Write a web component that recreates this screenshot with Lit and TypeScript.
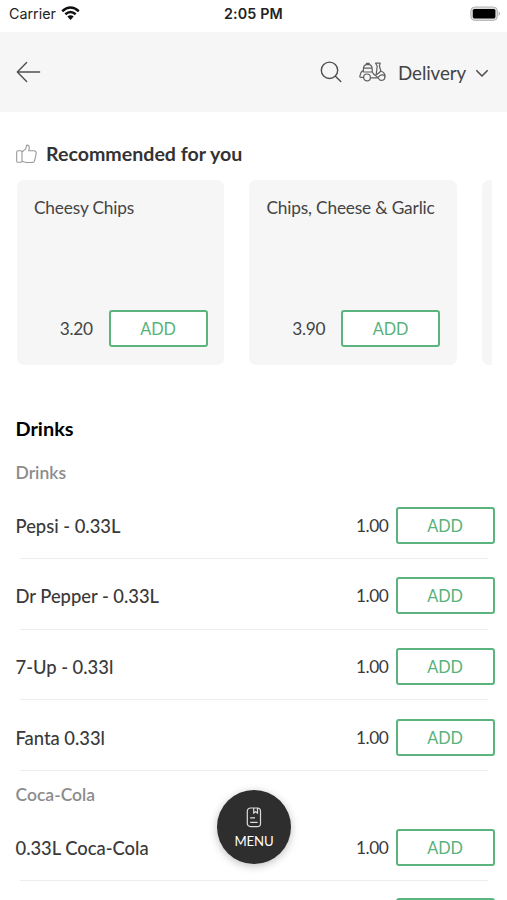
import { LitElement, html, css } from "lit";
import { customElement, property } from "lit/decorators.js";

interface Item {
  name: string;
  price: string;
}

const recommended: Item[] = [
  { name: "Cheesy Chips", price: "3.20" },
  { name: "Chips, Cheese & Garlic", price: "3.90" },
];

const sections: { title: string; items: Item[] }[] = [
  {
    title: "Drinks",
    items: [
      { name: "Pepsi - 0.33L", price: "1.00" },
      { name: "Dr Pepper - 0.33L", price: "1.00" },
      { name: "7-Up - 0.33l", price: "1.00" },
      { name: "Fanta 0.33l", price: "1.00" },
    ],
  },
  {
    title: "Coca-Cola",
    items: [{ name: "0.33L Coca-Cola", price: "1.00" }],
  },
];

@customElement("add-button")
export class AddButton extends LitElement {
  @property() label = "ADD";
  static styles = css`
    :host {
      display: block;
      flex: none;
    }
    .button {
      display: flex;
      align-items: center;
      justify-content: center;
      box-sizing: border-box;
      width: 99px;
      height: 37px;
      padding: 1px 0 0;
      border: 2px solid #5bb37d;
      border-radius: 3px;
      background: #fff;
      color: #58b27b;
      font: 400 16.3px/20px Lato, sans-serif;
      letter-spacing: -0.1px;
    }
  `;
  render() {
    return html`<button class="button">${this.label}</button>`;
  }
}

@customElement("status-bar")
export class StatusBar extends LitElement {
  static styles = css`
    :host {
      display: grid;
      grid-template-columns: 1fr auto 1fr;
      align-items: center;
      height: 32px;
      padding: 0 6px 4px 9px;
      box-sizing: border-box;
      background: #fff;
      color: #222;
      font: 400 14.3px/18px Inter, sans-serif;
    }
    .carrier {
      display: flex;
      align-items: center;
      gap: 5px;
    }
    .time {
      margin-right: 3px;
      font-weight: 600;
      font-size: 14.3px;
      letter-spacing: 0.14px;
    }
    .battery {
      justify-self: end;
      display: block;
      margin-top: -1px;
    }
    .wifi {
      display: block;
      margin-top: -2px;
    }
  `;
  render() {
    return html`
      <div class="carrier">
        <span>Carrier</span>
        <svg class="wifi" width="19" height="14" viewBox="0 0 19 14">
          <g fill="none" stroke="#111" stroke-width="2.5">
            <path d="M1.2 5.2Q9.5 -2.2 17.8 5.2" />
            <path d="M4.3 8.3Q9.5 3.8 14.7 8.3" />
          </g>
          <path d="M6.3 10.6Q9.5 7.9 12.7 10.6L9.5 13.9Z" fill="#111" />
        </svg>
      </div>
      <span class="time">2:05 PM</span>
      <svg class="battery" width="31" height="16" viewBox="0 0 31 16">
        <rect x=".8" y="1" width="26.6" height="13.4" rx="4" fill="#dcdcdc" stroke="#b4b4b4" />
        <rect x="2.8" y="3" width="22.6" height="9.4" rx="1.6" fill="#000" />
        <path d="M28.7 5.3Q31 7.7 28.7 10.1Z" fill="#999" />
      </svg>
    `;
  }
}

@customElement("top-bar")
export class TopBar extends LitElement {
  static styles = css`
    :host {
      display: flex;
      align-items: center;
      height: 80px;
      padding: 0 18px 0 16px;
      box-sizing: border-box;
      background: #f6f6f6;
      color: #444;
      font: 400 18.8px/24px Lato, sans-serif;
      letter-spacing: -0.12px;
    }
    svg {
      display: block;
      flex: none;
      fill: none;
      stroke: #505050;
      stroke-width: 1.4;
      stroke-linecap: round;
      stroke-linejoin: round;
    }
    .back {
      margin-right: auto;
    }
    .scooter {
      margin: 0 12px 0 17px;
      stroke: #606060;
      stroke-width: 1.2;
    }
    .label {
      margin-top: 1px;
    }
    .chevron {
      margin: 3px 0 0 9px;
    }
  `;
  render() {
    return html`
      <svg class="back" width="25" height="22" viewBox="0 0 25 22">
        <path d="M10.6 1.4L1.3 11L10.6 20.6M1.3 11H23.6" />
      </svg>
      <svg width="22" height="22" viewBox="0 0 22 22">
        <circle cx="9.5" cy="9.3" r="8.2" />
        <path d="M15.4 15.3L20.8 20.6" />
      </svg>
      <svg class="scooter" width="27" height="20" viewBox="0 0 27 20">
        <path d="M4.4 10V6.8Q4.8 3 7 2.6H10.6Q12.8 3 13.2 6.8V10ZM7.4 2.4V1.3H10.2V2.4M4.5 6.2H13.1" />
        <path d="M4.4 8.6Q2.4 9.2 1.8 11L.8 14.4Q.7 15.4 1.8 15.4H4.6M13.2 10L14.6 12M11.5 15.8H19" />
        <circle cx="8" cy="15.4" r="3.4" />
        <path d="M19.6 16.6A3.3 3.3 0 0 0 25.8 14.6" />
        <path d="M16.6 1.2H21.2L20.4 4L21.8 9Q25.8 10.6 26.2 14.2Q22.4 11 19 15.6L14.6 12M16.6 1.2L18.2 4L17.2 12.6Q18.4 12.6 21.8 9" />
      </svg>
      <span class="label">Delivery</span>
      <svg class="chevron" width="14" height="9" viewBox="0 0 14 9">
        <path d="M1.8 1.7L7 7L12.2 1.7" stroke-width="1.6" />
      </svg>
    `;
  }
}

@customElement("menu-row")
export class MenuRow extends LitElement {
  @property({ attribute: false }) item!: Item;
  static styles = css`
    :host {
      display: flex;
      flex-direction: column;
      height: 70.6px;
      font: 500 18.4px/24px Lato, sans-serif;
      color: #3a3a3a;
    }
    .line {
      display: flex;
      align-items: center;
      flex: 1;
      padding: 4px 12.5px 0 15.5px;
    }
    .name {
      flex: 1;
      margin-top: 1px;
      letter-spacing: -0.02px;
    }
    .price {
      font-size: 17.3px;
      font-weight: 400;
      letter-spacing: -0.4px;
      margin: 1px 7px 0 0;
    }
    .divider {
      height: 1px;
      margin: 0 19px 0 20px;
      background: #ececec;
    }
  `;
  render() {
    return html`
      <div class="line">
        <span class="name">${this.item.name}</span>
        <span class="price">${this.item.price}</span>
        <add-button></add-button>
      </div>
      <div class="divider"></div>
    `;
  }
}

@customElement("app-root")
export class AppRoot extends LitElement {
  static styles = css`
    :host {
      display: block;
      position: relative;
      height: 900px;
      overflow: hidden;
      background: #fff;
      color: #333;
      font: 400 18px/24px Lato, sans-serif;
    }
    .heading {
      display: flex;
      align-items: center;
      gap: 9px;
      height: 68px;
      padding: 16px 15px 0 16px;
      box-sizing: border-box;
      font-weight: 700;
      font-size: 19.6px;
    }
    .thumb {
      display: block;
      fill: none;
      stroke: #999;
      stroke-width: 1.1;
      stroke-linejoin: round;
    }
    .cards {
      display: flex;
      gap: 25px;
      margin: 0 15px 0 17px;
      overflow: hidden;
    }
    .card {
      display: flex;
      flex-direction: column;
      justify-content: space-between;
      flex: none;
      width: 207.4px;
      height: 185px;
      padding: 16px 16.8px 18px 17px;
      box-sizing: border-box;
      border-radius: 7px;
      background: #f6f6f6;
      color: #444;
      font-size: 17.3px;
      letter-spacing: -0.17px;
    }
    .buy {
      display: flex;
      align-items: center;
      justify-content: flex-end;
      gap: 15.8px;
      letter-spacing: -0.3px;
    }
    .category {
      margin: 51px 0 8.6px 15.5px;
      font-size: 19.9px;
      font-weight: 700;
      color: #000;
    }
    .section {
      height: 39.3px;
      padding: 12px 0 0 15.5px;
      box-sizing: border-box;
      font-size: 17.5px;
      font-weight: 600;
      color: #8c8c8c;
    }
    .section:first-of-type,
    .category + .section {
      height: 40px;
    }
    .next {
      display: flex;
      justify-content: flex-end;
      padding: 17.5px 12.5px 0 0;
    }
    .menu {
      position: absolute;
      left: 217px;
      top: 790px;
      display: flex;
      flex-direction: column;
      align-items: center;
      gap: 3px;
      width: 74px;
      height: 74px;
      padding: 17px 0 0;
      box-sizing: border-box;
      border: 0;
      border-radius: 50%;
      background: #2e2e2e;
      box-shadow: 0 2px 9px rgba(0, 0, 0, 0.25);
      color: #fff;
      font: 400 13.2px/20px Lato, sans-serif;
      letter-spacing: -0.2px;
    }
  `;
  render() {
    return html`
      <status-bar></status-bar>
      <top-bar></top-bar>
      <div class="heading">
        <svg class="thumb" width="21" height="20" viewBox="0 0 21 20">
          <path d="M6 7.6Q5.6 6.8 4.8 6.8H2Q.7 6.8 .7 8.2V16.9Q.7 18.3 2 18.3H4.8Q6 18.3 6 16.9ZM6 8L9.7 4.8L10.6 1.2Q13.8 .8 13.2 4.4L12.7 6.8H17.8Q20.4 7 20.2 9.5L18.7 16.4Q18.2 18.5 16.2 18.5H10.4Q8.2 18.4 6 16.9" />
        </svg>
        <span>Recommended for you</span>
      </div>
      <div class="cards">
        ${recommended.map(
          (item) => html`<div class="card">
            <span>${item.name}</span>
            <div class="buy"><span>${item.price}</span><add-button></add-button></div>
          </div>`
        )}
        <div class="card"></div>
      </div>
      <div class="category">Drinks</div>
      ${sections.map(
        (section) => html`
          <div class="section">${section.title}</div>
          ${section.items.map((item) => html`<menu-row .item=${item}></menu-row>`)}
        `
      )}
      <div class="next"><add-button label=""></add-button></div>
      <button class="menu">
        <svg width="16" height="21" viewBox="0 0 16 21" fill="none" stroke="#ddd" stroke-width="1.2">
          <rect x="1.3" y="1" width="13.2" height="18.6" rx="3.2" />
          <path d="M7.7 1V6L9.6 4.7L11.5 6V1M4.2 10.8H9M4.2 15.3H11.6" />
        </svg>
        <span>MENU</span>
      </button>
    `;
  }
}
